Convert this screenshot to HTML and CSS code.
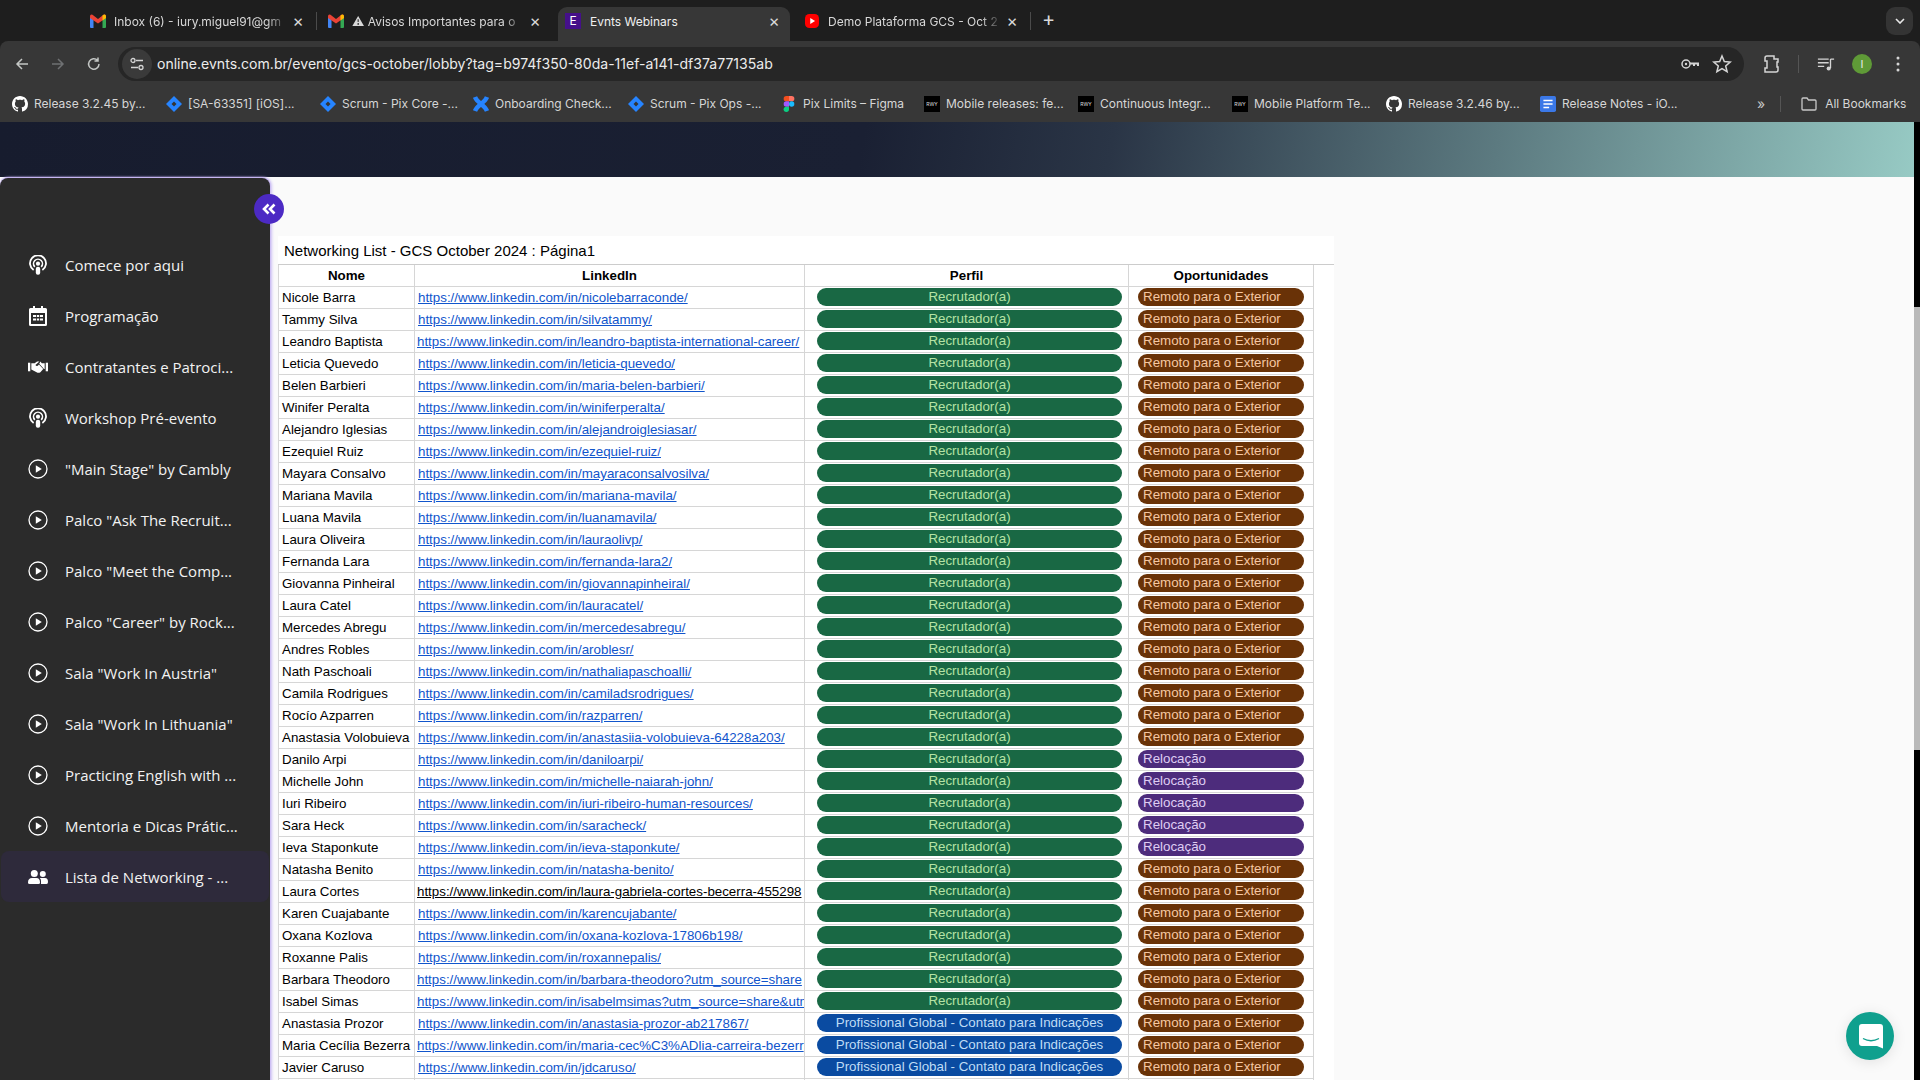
FILE: index.html
```html
<!DOCTYPE html>
<html>
<head>
  <meta charset="utf-8">
  <title>Evnts Webinars</title>
  <link rel="stylesheet" href="styles.css">
</head>
<body>
  <svg class="sprite" width="0" height="0">
    <symbol id="gmail" viewBox="0 0 16 14">
      <path d="M0 4 L3.500 4 L3.500 14 L1 14 Q0 14 0 13z" fill="#4285f4"/>
      <path d="M16 4 L12.500 4 L12.500 14 L15 14 Q16 14 16 13z" fill="#34a853"/>
      <path d="M0 2.500 Q0 0 2.500 .8 L8 5 L13.500 .8 Q16 0 16 2.500 V4 L8 9.500 L0 4z" fill="#ea4335"/>
      <path d="M12.500 1.600 L13.500 .8 Q16 0 16 2.500 V4 L12.500 6.400z" fill="#fbbc04"/>
    </symbol>
    <symbol id="github" viewBox="0 0 16 16">
      <path fill="#fff" d="M8 0C3.58 0 0 3.58 0 8c0 3.54 2.29 6.53 5.47 7.59.4.07.55-.17.55-.38 0-.19-.01-.82-.01-1.49-2.01.37-2.53-.49-2.69-.94-.09-.23-.48-.94-.82-1.13-.28-.15-.68-.52-.01-.53.63-.01 1.08.58 1.23.82.72 1.21 1.87.87 2.33.66.07-.52.28-.87.51-1.07-1.78-.2-3.64-.89-3.64-3.95 0-.87.31-1.59.82-2.15-.08-.2-.36-1.02.08-2.12 0 0 .67-.21 2.2.82.64-.18 1.32-.27 2-.27s1.36.09 2 .27c1.53-1.04 2.2-.82 2.2-.82.44 1.1.16 1.92.08 2.12.51.56.82 1.27.82 2.15 0 3.07-1.87 3.75-3.65 3.95.29.25.54.73.54 1.48 0 1.07-.01 1.93-.01 2.2 0 .21.15.46.55.38A8.013 8.013 0 0016 8c0-4.42-3.58-8-8-8z"/>
    </symbol>
    <symbol id="jira" viewBox="0 0 16 16">
      <path fill="#2684ff" d="M8 0 L16 8 L8 16 L0 8z"/>
      <path fill="#353535" d="M8 5.500 L10.500 8 L8 10.500 L5.500 8z"/>
    </symbol>
    <symbol id="cross" viewBox="0 0 16 16">
      <path fill="none" stroke="#2684ff" stroke-width="4.500" d="M2 1 C4 7 12 9 14 15 M14 1 C12 7 4 9 2 15"/>
    </symbol>
    <symbol id="figma" viewBox="0 0 10 15">
      <path fill="#f24e1e" d="M2.500 0 H5 V5 H2.500 a2.500 2.500 0 0 1 0-5z"/>
      <path fill="#ff7262" d="M5 0 H7.500 a2.500 2.500 0 0 1 0 5 H5z"/>
      <path fill="#a259ff" d="M2.500 5 H5 V10 H2.500 a2.500 2.500 0 0 1 0-5z"/>
      <circle fill="#1abcfe" cx="7.500" cy="7.500" r="2.500"/>
      <path fill="#0acf83" d="M2.500 10 H5 V12.500 a2.500 2.500 0 1 1 -2.500-2.500z"/>
    </symbol>
    <symbol id="docs" viewBox="0 0 14 14">
      <rect width="14" height="14" rx="1.500" fill="#3b78e7"/>
      <path stroke="#fff" stroke-width="1.400" d="M3 4 H11 M3 7 H11 M3 10 H8"/>
    </symbol>
    <symbol id="podcast" viewBox="0 0 20 22">
      <path fill="none" stroke="#fff" stroke-width="2" d="M5.200 16.500 A8.800 8.800 0 1 1 14.800 16.500"/>
      <path fill="none" stroke="#fff" stroke-width="1.800" d="M6.500 13 A4.900 4.900 0 1 1 13.500 13"/>
      <circle cx="10" cy="9.500" r="2.300" fill="#fff"/>
      <rect x="7.600" y="12.800" width="4.800" height="9" rx="2.200" fill="#fff"/>
    </symbol>
    <symbol id="calendar" viewBox="0 0 18 20">
      <path fill="#fff" fill-rule="evenodd" d="M4 0 H6 V2 H12 V0 H14 V2 H16.500 Q18 2 18 3.500 V18.500 Q18 20 16.500 20 H1.500 Q0 20 0 18.500 V3.500 Q0 2 1.500 2 H4z M2 7 V18 H16 V7z"/>
      <path fill="#fff" d="M4 9 H7 V11 H4z M7.800 9 H10.200 V11 H7.800z M11 9 H14 V11 H11z M4 12.500 H7 V14.500 H4z M7.800 12.500 H10.200 V14.500 H7.800z M11 12.500 H14 V14.500 H11z"/>
    </symbol>
    <symbol id="handshake" viewBox="0 0 21 13">
      <rect x="0" y="2" width="2.400" height="9" fill="#fff"/>
      <rect x="18.600" y="2" width="2.400" height="9" fill="#fff"/>
      <path fill="#fff" d="M3.500 2.500 L7 2.500 L9.500 .8 L12 .8 L7.800 4.500 Q8.500 6 10.500 4.800 L11.500 4 L16 8.500 L13 12 Q11.500 13 10 12.500 L3.500 9z"/>
      <path fill="#fff" d="M13 .8 L14.500 2.500 L17.500 2.500 L17.500 8.500 L16.800 8.500 L11.800 3.200z"/>
    </symbol>
    <symbol id="play" viewBox="0 0 20 20">
      <circle cx="10" cy="10" r="9" fill="none" stroke="#fff" stroke-width="1.300"/>
      <path fill="#fff" d="M7.800 6.300 L13.800 10 L7.800 13.700z"/>
    </symbol>
    <symbol id="users" viewBox="0 0 20 14">
      <circle cx="6.300" cy="3.500" r="3.500" fill="#fff"/>
      <path fill="#fff" d="M0 12.500 Q0 8 4 8 H8.500 Q12 8 12 12.500 Q12 14 10.500 14 H1.500 Q0 14 0 12.500z"/>
      <circle cx="14.800" cy="4" r="3" fill="#fff"/>
      <path fill="#fff" d="M13 14 L13 11 Q13 9 11.800 8 L17 8 Q20 8 20 12 Q20 14 18.500 14z"/>
    </symbol>
  </svg>

  <header class="browser">
    <div class="tabstrip">
      <div class="tab tab-1">
        <svg class="tab-icon"><use href="#gmail"/></svg>
        <span class="tab-title">Inbox (6) - iury.miguel91@gm</span>
        <span class="tab-close">×</span>
      </div>
      <div class="tab tab-2">
        <svg class="tab-icon"><use href="#gmail"/></svg>
        <span class="tab-title">⚠ Avisos Importantes para o</span>
        <span class="tab-close">×</span>
      </div>
      <div class="tab tab-3 active">
        <span class="evnts-icon">E</span>
        <span class="tab-title">Evnts Webinars</span>
        <span class="tab-close">×</span>
      </div>
      <div class="tab tab-4">
        <svg class="tab-icon" viewBox="0 0 16 16"><rect width="16" height="16" rx="5" fill="#f00"/><path fill="#fff" d="M6 4.500 L11.500 8 L6 11.500z"/></svg>
        <span class="tab-title">Demo Plataforma GCS - Oct 2</span>
        <span class="tab-close">×</span>
      </div>
      <span class="tab-plus">+</span>
      <span class="tab-menu">
        <svg width="10" height="6" viewBox="0 0 10 6"><path d="M1 1 L5 5 L9 1" fill="none" stroke="#e8e8e8" stroke-width="1.600"/></svg>
      </span>
    </div>

    <div class="toolbar">
      <svg class="tool" viewBox="0 0 16 16"><path d="M14 8 H3 M8 3 L3 8 L8 13" fill="none" stroke="#c4c7c5" stroke-width="1.500"/></svg>
      <svg class="tool" viewBox="0 0 16 16"><path d="M2 8 H13 M8 3 L13 8 L8 13" fill="none" stroke="#6f7173" stroke-width="1.500"/></svg>
      <svg class="tool" viewBox="0 0 16 16"><path d="M13 8 A5.200 5.200 0 1 1 11.500 4.300 M12 1.500 V5 H8.500" fill="none" stroke="#c4c7c5" stroke-width="1.500"/></svg>
      <div class="omnibox">
        <span class="site-info">
          <svg width="14" height="14" viewBox="0 0 14 14"><path d="M6 3.500 H13 M1 10.500 H8" stroke="#d5d5d5" stroke-width="1.300"/><circle cx="3" cy="3.500" r="2" fill="none" stroke="#d5d5d5" stroke-width="1.300"/><circle cx="11" cy="10.500" r="2" fill="none" stroke="#d5d5d5" stroke-width="1.300"/></svg>
        </span>
        <span class="url">online.evnts.com.br/evento/gcs-october/lobby?tag=b974f350-80da-11ef-a141-df37a77135ab</span>
        <svg class="omni-icon" viewBox="0 0 20 20"><circle cx="6" cy="10" r="4" fill="none" stroke="#d5d5d5" stroke-width="1.500"/><circle cx="6" cy="10" r="1.200" fill="#d5d5d5"/><path d="M10 8.500 H19 V12 H17 V10.500 H15 V12 H13 V10.500 H10z" fill="#d5d5d5"/></svg>
        <svg class="omni-icon star" viewBox="0 0 20 20"><path d="M10 2 L12.300 7.500 L18.200 8 L13.700 11.900 L15.100 17.700 L10 14.600 L4.900 17.700 L6.300 11.900 L1.800 8 L7.700 7.500z" fill="none" stroke="#d5d5d5" stroke-width="1.500"/></svg>
      </div>
      <svg class="ext-icon" viewBox="0 0 18 20"><path d="M5 2 H12 V5 H16 V8 H15 V13 H16 V16 Q16 18 14 18 H3 V14 H5 V7 H3 V4 Q3 2 5 2z" fill="none" stroke="#d5d5d5" stroke-width="1.500"/></svg>
      <span class="tool-sep"></span>
      <svg class="media-icon" viewBox="0 0 20 16"><path d="M1 2 H13 M1 6 H13 M1 10 H8" stroke="#d5d5d5" stroke-width="1.500"/><path d="M15 2 V12 M15 2 H19" stroke="#d5d5d5" stroke-width="1.500" fill="none"/><circle cx="13" cy="12.500" r="2.300" fill="#d5d5d5"/></svg>
      <span class="avatar">I</span>
      <svg class="dots" viewBox="0 0 4 16"><circle cx="2" cy="2" r="1.500" fill="#d5d5d5"/><circle cx="2" cy="8" r="1.500" fill="#d5d5d5"/><circle cx="2" cy="14" r="1.500" fill="#d5d5d5"/></svg>
    </div>

    <nav class="bookmarks">
      <a class="bm w154"><svg class="bm-icon"><use href="#github"/></svg>Release 3.2.45 by...</a>
      <a class="bm w154"><svg class="bm-icon"><use href="#jira"/></svg>[SA-63351] [iOS]...</a>
      <a class="bm w153"><svg class="bm-icon"><use href="#jira"/></svg>Scrum - Pix Core -...</a>
      <a class="bm w155"><svg class="bm-icon"><use href="#cross"/></svg>Onboarding Check...</a>
      <a class="bm w153"><svg class="bm-icon"><use href="#jira"/></svg>Scrum - Pix Ops -...</a>
      <a class="bm w143"><svg class="bm-icon"><use href="#figma"/></svg>Pix Limits – Figma</a>
      <a class="bm w154"><span class="rwy">RWY</span>Mobile releases: fe...</a>
      <a class="bm w154"><span class="rwy">RWY</span>Continuous Integr...</a>
      <a class="bm w154"><span class="rwy">RWY</span>Mobile Platform Te...</a>
      <a class="bm w154"><svg class="bm-icon"><use href="#github"/></svg>Release 3.2.46 by...</a>
      <a class="bm w154"><svg class="bm-icon"><use href="#docs"/></svg>Release Notes - iO...</a>
      <span class="bm-more">»</span>
      <span class="bm-sep"></span>
      <a class="bm bm-all">
        <svg class="bm-icon" viewBox="0 0 16 14"><path d="M1 2 Q1 1 2 1 H6 L7.500 3 H14 Q15 3 15 4 V12 Q15 13 14 13 H2 Q1 13 1 12z" fill="none" stroke="#c8c8c8" stroke-width="1.300"/></svg>
        All Bookmarks
      </a>
    </nav>
  </header>

  <div class="page">
    <div class="page-scroll">
      <div class="hero"></div>
      <div class="content">
        <aside class="sidebar">
          <a class="side-item"><svg class="side-icon"><use href="#podcast"/></svg><span>Comece por aqui</span></a>
          <a class="side-item"><svg class="side-icon"><use href="#calendar"/></svg><span>Programação</span></a>
          <a class="side-item"><svg class="side-icon"><use href="#handshake"/></svg><span>Contratantes e Patroci...</span></a>
          <a class="side-item"><svg class="side-icon"><use href="#podcast"/></svg><span>Workshop Pré-evento</span></a>
          <a class="side-item"><svg class="side-icon"><use href="#play"/></svg><span>"Main Stage" by Cambly</span></a>
          <a class="side-item"><svg class="side-icon"><use href="#play"/></svg><span>Palco "Ask The Recruit...</span></a>
          <a class="side-item"><svg class="side-icon"><use href="#play"/></svg><span>Palco "Meet the Comp...</span></a>
          <a class="side-item"><svg class="side-icon"><use href="#play"/></svg><span>Palco "Career" by Rock...</span></a>
          <a class="side-item"><svg class="side-icon"><use href="#play"/></svg><span>Sala "Work In Austria"</span></a>
          <a class="side-item"><svg class="side-icon"><use href="#play"/></svg><span>Sala "Work In Lithuania"</span></a>
          <a class="side-item"><svg class="side-icon"><use href="#play"/></svg><span>Practicing English with ...</span></a>
          <a class="side-item"><svg class="side-icon"><use href="#play"/></svg><span>Mentoria e Dicas Prátic...</span></a>
          <a class="side-item selected"><svg class="side-icon"><use href="#users"/></svg><span>Lista de Networking - ...</span></a>
          <button class="collapse">
            <svg width="14" height="12" viewBox="0 0 14 12"><path d="M6.500 1.500 L2 6 L6.500 10.500 M12.500 1.500 L8 6 L12.500 10.500" fill="none" stroke="#fff" stroke-width="2.600"/></svg>
          </button>
        </aside>

        <main class="main">
          <section class="sheet">
            <div class="sheet-title">Networking List - GCS October 2024 : Página1</div>
            <table class="list">
              <colgroup><col class="c-name"><col class="c-link"><col class="c-perfil"><col class="c-opp"></colgroup>
              <thead><tr><th>Nome</th><th>LinkedIn</th><th>Perfil</th><th>Oportunidades</th></tr></thead>
              <tbody>
                <tr><td>Nicole Barra</td><td><a>https://www.linkedin.com/in/nicolebarraconde/</a></td><td><span class="pill rec">Recrutador(a)</span></td><td><span class="pill rem">Remoto para o Exterior</span></td></tr>
                <tr><td>Tammy Silva</td><td><a>https://www.linkedin.com/in/silvatammy/</a></td><td><span class="pill rec">Recrutador(a)</span></td><td><span class="pill rem">Remoto para o Exterior</span></td></tr>
                <tr><td>Leandro Baptista</td><td class="wide"><a>https://www.linkedin.com/in/leandro-baptista-international-career/</a></td><td><span class="pill rec">Recrutador(a)</span></td><td><span class="pill rem">Remoto para o Exterior</span></td></tr>
                <tr><td>Leticia Quevedo</td><td><a>https://www.linkedin.com/in/leticia-quevedo/</a></td><td><span class="pill rec">Recrutador(a)</span></td><td><span class="pill rem">Remoto para o Exterior</span></td></tr>
                <tr><td>Belen Barbieri</td><td><a>https://www.linkedin.com/in/maria-belen-barbieri/</a></td><td><span class="pill rec">Recrutador(a)</span></td><td><span class="pill rem">Remoto para o Exterior</span></td></tr>
                <tr><td>Winifer Peralta</td><td><a>https://www.linkedin.com/in/winiferperalta/</a></td><td><span class="pill rec">Recrutador(a)</span></td><td><span class="pill rem">Remoto para o Exterior</span></td></tr>
                <tr><td>Alejandro Iglesias</td><td><a>https://www.linkedin.com/in/alejandroiglesiasar/</a></td><td><span class="pill rec">Recrutador(a)</span></td><td><span class="pill rem">Remoto para o Exterior</span></td></tr>
                <tr><td>Ezequiel Ruiz</td><td><a>https://www.linkedin.com/in/ezequiel-ruiz/</a></td><td><span class="pill rec">Recrutador(a)</span></td><td><span class="pill rem">Remoto para o Exterior</span></td></tr>
                <tr><td>Mayara Consalvo</td><td><a>https://www.linkedin.com/in/mayaraconsalvosilva/</a></td><td><span class="pill rec">Recrutador(a)</span></td><td><span class="pill rem">Remoto para o Exterior</span></td></tr>
                <tr><td>Mariana Mavila</td><td><a>https://www.linkedin.com/in/mariana-mavila/</a></td><td><span class="pill rec">Recrutador(a)</span></td><td><span class="pill rem">Remoto para o Exterior</span></td></tr>
                <tr><td>Luana Mavila</td><td><a>https://www.linkedin.com/in/luanamavila/</a></td><td><span class="pill rec">Recrutador(a)</span></td><td><span class="pill rem">Remoto para o Exterior</span></td></tr>
                <tr><td>Laura Oliveira</td><td><a>https://www.linkedin.com/in/lauraolivp/</a></td><td><span class="pill rec">Recrutador(a)</span></td><td><span class="pill rem">Remoto para o Exterior</span></td></tr>
                <tr><td>Fernanda Lara</td><td><a>https://www.linkedin.com/in/fernanda-lara2/</a></td><td><span class="pill rec">Recrutador(a)</span></td><td><span class="pill rem">Remoto para o Exterior</span></td></tr>
                <tr><td>Giovanna Pinheiral</td><td><a>https://www.linkedin.com/in/giovannapinheiral/</a></td><td><span class="pill rec">Recrutador(a)</span></td><td><span class="pill rem">Remoto para o Exterior</span></td></tr>
                <tr><td>Laura Catel</td><td><a>https://www.linkedin.com/in/lauracatel/</a></td><td><span class="pill rec">Recrutador(a)</span></td><td><span class="pill rem">Remoto para o Exterior</span></td></tr>
                <tr><td>Mercedes Abregu</td><td><a>https://www.linkedin.com/in/mercedesabregu/</a></td><td><span class="pill rec">Recrutador(a)</span></td><td><span class="pill rem">Remoto para o Exterior</span></td></tr>
                <tr><td>Andres Robles</td><td><a>https://www.linkedin.com/in/aroblesr/</a></td><td><span class="pill rec">Recrutador(a)</span></td><td><span class="pill rem">Remoto para o Exterior</span></td></tr>
                <tr><td>Nath Paschoali</td><td><a>https://www.linkedin.com/in/nathaliapaschoalli/</a></td><td><span class="pill rec">Recrutador(a)</span></td><td><span class="pill rem">Remoto para o Exterior</span></td></tr>
                <tr><td>Camila Rodrigues</td><td><a>https://www.linkedin.com/in/camiladsrodrigues/</a></td><td><span class="pill rec">Recrutador(a)</span></td><td><span class="pill rem">Remoto para o Exterior</span></td></tr>
                <tr><td>Rocío Azparren</td><td><a>https://www.linkedin.com/in/razparren/</a></td><td><span class="pill rec">Recrutador(a)</span></td><td><span class="pill rem">Remoto para o Exterior</span></td></tr>
                <tr><td>Anastasia Volobuieva</td><td><a>https://www.linkedin.com/in/anastasiia-volobuieva-64228a203/</a></td><td><span class="pill rec">Recrutador(a)</span></td><td><span class="pill rem">Remoto para o Exterior</span></td></tr>
                <tr><td>Danilo Arpi</td><td><a>https://www.linkedin.com/in/daniloarpi/</a></td><td><span class="pill rec">Recrutador(a)</span></td><td><span class="pill rel">Relocação</span></td></tr>
                <tr><td>Michelle John</td><td><a>https://www.linkedin.com/in/michelle-naiarah-john/</a></td><td><span class="pill rec">Recrutador(a)</span></td><td><span class="pill rel">Relocação</span></td></tr>
                <tr><td>Iuri Ribeiro</td><td><a>https://www.linkedin.com/in/iuri-ribeiro-human-resources/</a></td><td><span class="pill rec">Recrutador(a)</span></td><td><span class="pill rel">Relocação</span></td></tr>
                <tr><td>Sara Heck</td><td><a>https://www.linkedin.com/in/saracheck/</a></td><td><span class="pill rec">Recrutador(a)</span></td><td><span class="pill rel">Relocação</span></td></tr>
                <tr><td>Ieva Staponkute</td><td><a>https://www.linkedin.com/in/ieva-staponkute/</a></td><td><span class="pill rec">Recrutador(a)</span></td><td><span class="pill rel">Relocação</span></td></tr>
                <tr><td>Natasha Benito</td><td><a>https://www.linkedin.com/in/natasha-benito/</a></td><td><span class="pill rec">Recrutador(a)</span></td><td><span class="pill rem">Remoto para o Exterior</span></td></tr>
                <tr><td>Laura Cortes</td><td class="wide"><a class="plain">https://www.linkedin.com/in/laura-gabriela-cortes-becerra-455298</a></td><td><span class="pill rec">Recrutador(a)</span></td><td><span class="pill rem">Remoto para o Exterior</span></td></tr>
                <tr><td>Karen Cuajabante</td><td><a>https://www.linkedin.com/in/karencujabante/</a></td><td><span class="pill rec">Recrutador(a)</span></td><td><span class="pill rem">Remoto para o Exterior</span></td></tr>
                <tr><td>Oxana Kozlova</td><td><a>https://www.linkedin.com/in/oxana-kozlova-17806b198/</a></td><td><span class="pill rec">Recrutador(a)</span></td><td><span class="pill rem">Remoto para o Exterior</span></td></tr>
                <tr><td>Roxanne Palis</td><td><a>https://www.linkedin.com/in/roxannepalis/</a></td><td><span class="pill rec">Recrutador(a)</span></td><td><span class="pill rem">Remoto para o Exterior</span></td></tr>
                <tr><td>Barbara Theodoro</td><td class="wide"><a>https://www.linkedin.com/in/barbara-theodoro?utm_source=share</a></td><td><span class="pill rec">Recrutador(a)</span></td><td><span class="pill rem">Remoto para o Exterior</span></td></tr>
                <tr><td>Isabel Simas</td><td class="wide"><a>https://www.linkedin.com/in/isabelmsimas?utm_source=share&amp;utm</a></td><td><span class="pill rec">Recrutador(a)</span></td><td><span class="pill rem">Remoto para o Exterior</span></td></tr>
                <tr><td>Anastasia Prozor</td><td><a>https://www.linkedin.com/in/anastasia-prozor-ab217867/</a></td><td><span class="pill pro">Profissional Global - Contato para Indicações</span></td><td><span class="pill rem">Remoto para o Exterior</span></td></tr>
                <tr><td>Maria Cecília Bezerra</td><td class="wide"><a>https://www.linkedin.com/in/maria-cec%C3%ADlia-carreira-bezerr</a></td><td><span class="pill pro">Profissional Global - Contato para Indicações</span></td><td><span class="pill rem">Remoto para o Exterior</span></td></tr>
                <tr><td>Javier Caruso</td><td><a>https://www.linkedin.com/in/jdcaruso/</a></td><td><span class="pill pro">Profissional Global - Contato para Indicações</span></td><td><span class="pill rem">Remoto para o Exterior</span></td></tr>
                <tr><td></td><td></td><td></td><td></td></tr>
              </tbody>
            </table>
          </section>
        </main>
      </div>
    </div>
    <div class="scrollbar"><div class="thumb"></div></div>
    <button class="chat">
      <svg width="24" height="25" viewBox="0 0 24 25"><path fill="#fff" d="M3 0 H21 Q24 0 24 3 V24.500 L18 22 H3 Q0 22 0 19 V3 Q0 0 3 0z"/><path fill="none" stroke="#0fa08e" stroke-width="1.300" d="M4 14.500 Q12 19 20 14.500"/></svg>
    </button>
  </div>
</body>
</html>
```

FILE: styles.css
```css
* { box-sizing: border-box; }
html, body { margin: 0; height: 100%; }
body {
  width: 1920px;
  height: 1080px;
  overflow: hidden;
  display: flex;
  flex-direction: column;
  background: #1e1e1e;
  font-family: "Inter", "Liberation Sans", sans-serif;
}
.sprite { position: absolute; }

/* browser top */
.browser { flex: none; height: 122px; }
.tabstrip {
  height: 41px;
  padding: 7px 7px 0 86px;
  display: flex;
  align-items: flex-start;
  background: #1e1e1e;
}
.tab {
  position: relative;
  height: 34px;
  padding-bottom: 6px;
  display: flex;
  align-items: center;
  color: #d8d8d8;
  font-size: 12px;
}
.tab-1 { width: 230px; padding-left: 4px; padding-right: 8px; }
.tab-2 { width: 242px; padding-left: 12px; padding-right: 13px; }
.tab-3 { width: 232px; padding-left: 7px; padding-right: 6px; }
.tab-4 { width: 241px; padding-left: 14px; padding-right: 9px; }
.tab-2::before, .tab-4::after {
  content: "";
  position: absolute;
  top: 5px;
  height: 18px;
  width: 1px;
  background: #4b4b4b;
}
.tab-2::before { left: 0; }
.tab-4::after { right: 0; }
.tab.active {
  background: #373737;
  border-radius: 9px 9px 0 0;
  color: #f0f0f0;
}
.tab-icon { flex: none; width: 16px; height: 14px; margin: 0 8px 0 0; }
.evnts-icon {
  flex: none;
  width: 16px;
  height: 16px;
  margin-right: 9px;
  background: #45108a;
  color: #fff;
  font-size: 12px;
  line-height: 16px;
  text-align: center;
}
.tab-title {
  flex: 1;
  min-width: 0;
  overflow: hidden;
  white-space: nowrap;
  -webkit-mask-image: linear-gradient(to right, #000 88%, transparent 100%);
  mask-image: linear-gradient(to right, #000 88%, transparent 100%);
}
.active .tab-title { -webkit-mask-image: none; mask-image: none; }
.tab-close { flex: none; width: 20px; text-align: center; font-size: 17px; line-height: 16px; color: #d8d8d8; }
.tab-plus { margin: 0 0 0 11px; color: #d8d8d8; font-size: 20px; line-height: 24px; }
.tab-menu {
  margin-left: auto;
  width: 27px;
  height: 28px;
  display: flex;
  align-items: center;
  justify-content: center;
  background: #343434;
  border-radius: 9px;
}

.toolbar {
  height: 47px;
  padding: 6px 0 7px 14px;
  display: flex;
  align-items: center;
  background: #373737;
  border-radius: 8px 8px 0 0;
}
.tool { flex: none; width: 16px; height: 16px; margin-right: 20px; }
.omnibox {
  flex: none;
  width: 1626px;
  height: 34px;
  margin-left: -4px;
  padding: 0 12px 0 2px;
  display: flex;
  align-items: center;
  background: #262626;
  border-radius: 17px;
}
.site-info {
  flex: none;
  width: 30px;
  height: 30px;
  margin-left: 2px;
  display: flex;
  align-items: center;
  justify-content: center;
  background: #3a3a3a;
  border-radius: 50%;
}
.url { flex: 1; margin: 0 0 1px 5px; color: #ececec; font-size: 14.05px; white-space: nowrap; }
.omni-icon { flex: none; width: 20px; height: 20px; margin-left: 12px; }
.ext-icon { flex: none; width: 18px; height: 20px; margin-left: 18px; }
.tool-sep { flex: none; width: 1px; height: 18px; margin: 0 18px; background: #555; }
.media-icon { flex: none; width: 18px; height: 15px; }
.avatar {
  flex: none;
  width: 20px;
  height: 20px;
  margin-left: 17px;
  background: #5f9a37;
  border-radius: 50%;
  color: #e8e8e8;
  font-size: 11px;
  line-height: 20px;
  text-align: center;
}
.dots { flex: none; width: 4px; height: 16px; margin-left: 24px; }

.bookmarks {
  height: 34px;
  padding: 0 0 3px 12px;
  display: flex;
  align-items: center;
  background: #373737;
  color: #d6d6d6;
  font-size: 12px;
}
.bm { display: flex; align-items: center; white-space: nowrap; }
.w143 { width: 143px; }
.w153 { width: 153px; }
.w154 { width: 154px; }
.w155 { width: 155px; }
.bm-icon { flex: none; width: 16px; height: 16px; margin-right: 6px; }
.rwy {
  flex: none;
  width: 16px;
  height: 16px;
  margin-right: 6px;
  background: #000;
  color: #ddd;
  font-size: 5px;
  line-height: 16px;
  text-align: center;
}
.bm-more { margin-left: 63px; color: #c8c8c8; font-size: 14px; }
.bm-sep { width: 1px; height: 16px; margin: 0 20px 0 15px; background: #555; }
.bm-all { color: #d6d6d6; }
.bm-all .bm-icon { margin-right: 8px; }

/* page */
.page { position: relative; flex: 1; display: flex; overflow: hidden; background: #000; }
.page-scroll { flex: none; width: 1914px; display: flex; flex-direction: column; background: #fafafa; }
.hero {
  flex: none;
  height: 55px;
  background: linear-gradient(100deg, #171c2e 0%, #1a2033 45%, #2a3546 58%, #5c7a80 78%, #97cac4 100%);
}
.content { flex: 1; display: flex; }
.sidebar {
  position: relative;
  flex: none;
  width: 270px;
  margin-top: 1px;
  padding-top: 61px;
  background: #2b2b2b;
  border-radius: 8px 8px 0 0;
  box-shadow: 0 -1px 2px #b9a5ee, 2px 0 3px #cfc2f5;
  font-family: "Open Sans", sans-serif;
}
.side-item {
  height: 51px;
  margin: 0 1px;
  padding-left: 27px;
  display: flex;
  align-items: center;
  gap: 17px;
  color: #f2f2f2;
  font-size: 15px;
  border-radius: 8px;
  white-space: nowrap;
}
.side-item.selected { background: #2e2a3b; }
.side-icon { flex: none; width: 20px; height: 20px; }
.collapse {
  position: absolute;
  top: 16px;
  right: -14px;
  width: 30px;
  height: 30px;
  padding: 0;
  border: 0;
  border-radius: 50%;
  display: flex;
  align-items: center;
  justify-content: center;
  background: #4c2ac4;
}
.main { flex: 1; padding: 59px 0 0 8px; overflow: hidden; }

/* sheet */
.sheet { width: 1056px; height: 900px; background: #fff; font-family: "Liberation Sans", Arial, sans-serif; }
.sheet-title { height: 29px; padding-left: 6px; color: #000; font-size: 15px; line-height: 30px; border-bottom: 1px solid #ccc; }
.list { width: 1035px; table-layout: fixed; border-collapse: collapse; font-size: 13.33px; color: #000; }
.c-name { width: 136px; }
.c-link { width: 390px; }
.c-perfil { width: 324px; }
.c-opp { width: 185px; }
.list th, .list td {
  height: 22px;
  padding: 1px 3px 0;
  border: 1px solid #d6d6d6;
  overflow: hidden;
  white-space: nowrap;
  line-height: 19px;
}
.list th { height: 21px; border-top: 0; font-weight: bold; text-align: center; }
.list a { color: #1155cc; text-decoration: underline; }
.list a.plain { color: #000; }
.list td:nth-child(2) { padding-left: 3px; }
.list td.wide { padding-left: 2px; }
.list td:nth-child(3), .list td:nth-child(4) { padding: 0; }
.pill {
  display: block;
  height: 18px;
  border-radius: 9px;
  font-size: 13.33px;
  line-height: 18px;
  white-space: nowrap;
}
.rec { margin: 0 6px 0 12px; background: #196844; color: #b5e3a4; text-align: center; }
.pro { margin: 0 6px 0 12px; background: #0a4ba1; color: #bfdcf5; text-align: center; }
.rem { margin: 0 9px 0 9px; padding-left: 5px; background: #693207; color: #f6c7a2; }
.rel { margin: 0 9px 0 9px; padding-left: 5px; background: #4d2c7c; color: #dfcdf3; }

.scrollbar { flex: none; width: 6px; background: #000; }
.thumb { height: 443px; margin-top: 185px; background: #b9b9b9; }
.chat {
  position: absolute;
  left: 1846px;
  top: 890px;
  width: 48px;
  height: 48px;
  padding: 0 0 0 2px;
  border: 0;
  border-radius: 50%;
  display: flex;
  align-items: center;
  justify-content: center;
  background: #0fa08e;
  box-shadow: 0 2px 14px rgba(0, 0, 0, 0.1);
}
```
